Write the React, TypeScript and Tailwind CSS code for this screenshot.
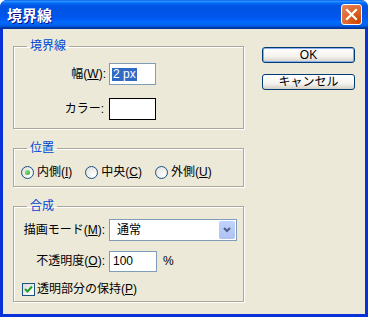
import React from "react";

const font = "font-['Liberation_Sans','Noto_Sans_CJK_JP',sans-serif]";

function U({ children }: { children: React.ReactNode }) {
  return <span className="underline underline-offset-[1px]">{children}</span>;
}

function GroupBox({
  title,
  className,
  children,
}: {
  title: string;
  className?: string;
  children: React.ReactNode;
}) {
  return (
    <fieldset
      className={`border border-[#aca899] shadow-[1px_1px_0_#fff,inset_1px_1px_0_#fff] ml-0 ${className ?? ""}`}
    >
      <legend className="ml-[13px] px-[3px] text-[12px] leading-[12px] text-[#0046d5]">
        {title}
      </legend>
      {children}
    </fieldset>
  );
}

function Radio({ checked }: { checked?: boolean }) {
  return (
    <span className="w-[13px] h-[13px] rounded-full border border-[#1c5180] bg-[radial-gradient(circle_at_70%_70%,#fff_0%,#dcdcd7_100%)] flex items-center justify-center shrink-0">
      {checked && (
        <span className="w-[5px] h-[5px] rounded-full bg-[radial-gradient(circle_at_35%_35%,#8fe27e_0%,#21a121_100%)]" />
      )}
    </span>
  );
}

function Button({ children, primary }: { children: React.ReactNode; primary?: boolean }) {
  return (
    <button
      className={`w-[93px] h-[16px] rounded-[3px] border border-[#003c74] bg-[linear-gradient(to_bottom,#fff_0%,#f4f3ee_60%,#d6d0c5_100%)] text-[12px] leading-[12px] text-black flex items-center justify-center ${
        primary ? "shadow-[inset_0_0_0_1px_#8aaef0]" : ""
      }`}
    >
      {children}
    </button>
  );
}

export default function App() {
  return (
    <div className={`w-[368px] h-[317px] ${font} select-none`}>
      <div className="w-full h-full flex flex-col rounded-t-[7px] bg-[#0831d9] overflow-hidden">
        {/* title bar */}
        <div className="h-[29px] shrink-0 flex items-center justify-between pl-[7px] pr-[6px] bg-[linear-gradient(to_bottom,#0058ee_0%,#3593ff_4%,#288eff_6%,#127dff_8%,#036ffc_10%,#0262ee_14%,#0057e5_20%,#0054e3_24%,#0055eb_56%,#005bf5_66%,#026afe_76%,#0062ef_86%,#0052d6_92%,#0040ab_94%,#003092_100%)]">
          <span className="text-white font-bold text-[15px] leading-none [text-shadow:1px_1px_0_#0f1089] pt-[1px]">
            境界線
          </span>
          <button className="w-[21px] h-[21px] rounded-[3px] border border-white bg-[radial-gradient(circle_at_85%_85%,#cc4600_0%,#dc6527_45%,#e58661_100%)] flex items-center justify-center">
            <svg width="13" height="13" viewBox="0 0 13 13">
              <path d="M2 2 L11 11 M11 2 L2 11" stroke="#fff" strokeWidth="2.2" strokeLinecap="square" />
            </svg>
          </button>
        </div>

        {/* client area */}
        <div className="flex-1 mx-[3px] mb-[3px] bg-[#ece9d8] flex text-[12px] leading-[13px] text-black">
          <div className="w-[241px] pl-[10px] pt-[11px]">
            <GroupBox title="境界線" className="w-[231px] h-[89px]">
              <div className="pt-[11px] flex flex-col gap-[13px]">
                <div className="flex items-center">
                  <span className="w-[95px] text-right pr-[3px]">
                    幅(<U>W</U>):
                  </span>
                  <div className="w-[47px] h-[22px] border border-[#7f9db9] bg-white flex items-center pl-[2px]">
                    <span className="bg-[#316ac5] text-white px-[1px]">2 px</span>
                  </div>
                </div>
                <div className="flex items-center">
                  <span className="w-[95px] text-right pr-[5px]">カラー:</span>
                  <div className="w-[47px] h-[22px] border border-black bg-white" />
                </div>
              </div>
            </GroupBox>

            <GroupBox title="位置" className="w-[231px] h-[45px] mt-[13px]">
              <div className="pt-[12px] pl-[7px] flex items-center">
                <label className="flex items-center gap-[3px]">
                  <Radio checked />
                  <span>
                    内側(<U>I</U>)
                  </span>
                </label>
                <label className="flex items-center gap-[3px] ml-[13px]">
                  <Radio />
                  <span>
                    中央(<U>C</U>)
                  </span>
                </label>
                <label className="flex items-center gap-[3px] ml-[13px]">
                  <Radio />
                  <span>
                    外側(<U>U</U>)
                  </span>
                </label>
              </div>
            </GroupBox>

            <GroupBox title="合成" className="w-[231px] h-[102px] mt-[13px]">
              <div className="pt-[7px] flex flex-col">
                <div className="flex items-center">
                  <span className="w-[95px] text-right pr-[4px]">
                    描画モード(<U>M</U>):
                  </span>
                  <div className="w-[128px] h-[22px] border border-[#7f9db9] bg-white flex items-center justify-between pl-[7px] pr-[1px]">
                    <span>通常</span>
                    <span className="w-[16px] h-[18px] rounded-[2px] bg-[linear-gradient(to_bottom,#c3d3fd_0%,#b5c8f7_60%,#aec2f5_100%)] flex items-center justify-center">
                      <svg width="8" height="6" viewBox="0 0 8 6">
                        <path d="M1 1 L4 4 L7 1" stroke="#4d6185" strokeWidth="2" fill="none" />
                      </svg>
                    </span>
                  </div>
                </div>
                <div className="flex items-center mt-[10px]">
                  <span className="w-[95px] text-right pr-[4px]">
                    不透明度(<U>O</U>):
                  </span>
                  <div className="w-[48px] h-[21px] border border-[#7f9db9] bg-white flex items-center pl-[3px]">
                    100
                  </div>
                  <span className="ml-[6px]">%</span>
                </div>
                <label className="flex items-center gap-[2px] mt-[11px] pl-[8px]">
                  <span className="w-[13px] h-[13px] border border-[#1c5180] bg-[linear-gradient(135deg,#dcdcd7_0%,#fff_100%)] flex items-center justify-center">
                    <svg width="9" height="9" viewBox="0 0 9 9">
                      <path d="M1 4 L3.5 6.5 L8 1.5" stroke="#21a121" strokeWidth="2" fill="none" />
                    </svg>
                  </span>
                  <span>
                    透明部分の保持(<U>P</U>)
                  </span>
                </label>
              </div>
            </GroupBox>
          </div>

          <div className="pl-[18px] pt-[18px] flex flex-col gap-[11px]">
            <Button primary>OK</Button>
            <Button>キャンセル</Button>
          </div>
        </div>
      </div>
    </div>
  );
}
